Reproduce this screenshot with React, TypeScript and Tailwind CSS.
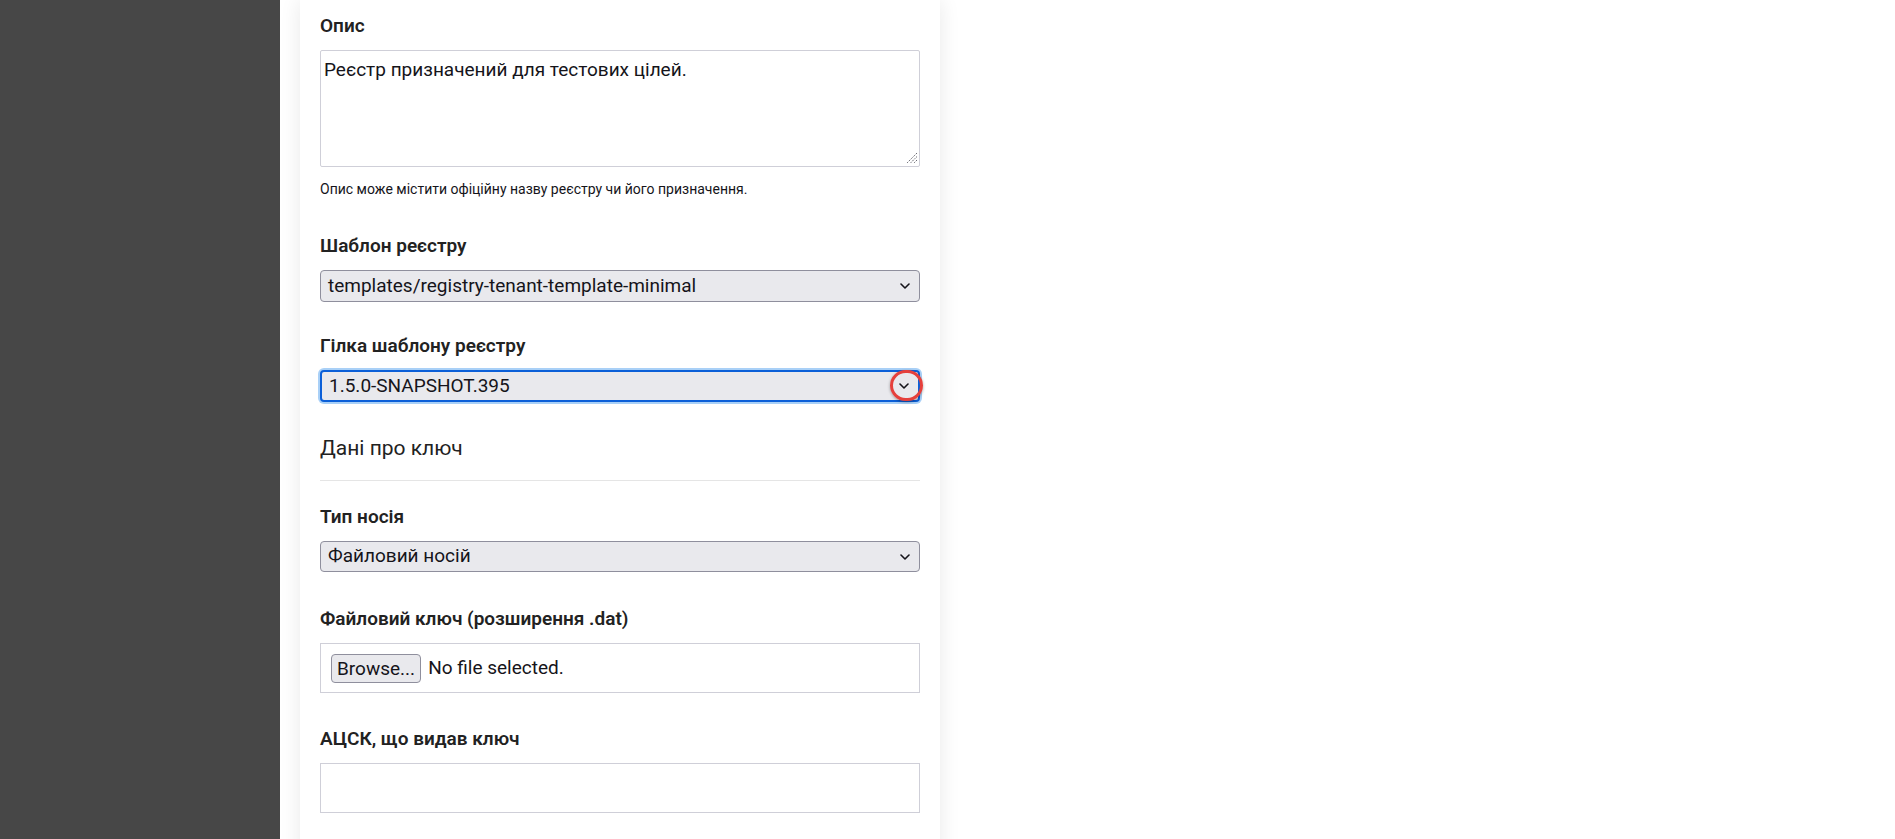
import React from 'react';

const font = { fontFamily: 'Roboto, "Noto Sans", sans-serif' };

function Chevron() {
  return (
    <svg width="10" height="6" viewBox="0 0 10 6" className="shrink-0">
      <polyline points="1,1 5,5 9,1" fill="none" stroke="#15141a" strokeWidth="1.6" strokeLinecap="round" strokeLinejoin="round" />
    </svg>
  );
}

function Label({ children, className = '' }: { children: React.ReactNode; className?: string }) {
  return (
    <div className={`text-[19px] leading-[24px] font-semibold text-[#222] mb-[12px] ${className}`}>{children}</div>
  );
}

function Select({ value, focused = false, h = 'h-[32px]' }: { value: string; focused?: boolean; h?: string }) {
  return (
    <div
      className={`relative flex items-center justify-between ${h} rounded-[4px] bg-[#e9e9ed] pl-[7px] pr-[9px] text-[19px] text-[#15141a] ${
        focused
          ? 'border-2 border-[#0b5fd8] shadow-[0_0_0_2px_#a9d0f7] pl-[6px] pr-[8px]'
          : 'border border-[#8f8f9d]'
      }`}
    >
      <span>{value}</span>
      <Chevron />
      {focused && (
        <span className="absolute right-[-5px] top-[-2px] w-[33px] h-[31px] rounded-full border-[3px] border-[#e5403c] shadow-[0_1px_3px_rgba(0,0,0,0.35)]" />
      )}
    </div>
  );
}

export default function App() {
  return (
    <div className="flex h-[839px] w-full overflow-hidden bg-white" style={font}>
      {/* Sidebar */}
      <div className="w-[280px] shrink-0 bg-[#474747]" />

      {/* Main */}
      <div className="flex-1 bg-white pl-[20px]">
        <div className="w-[640px] bg-white shadow-[0_0_20px_rgba(0,0,0,0.09)] px-[20px] pt-[14px] pb-[60px]">
          <Label>Опис</Label>
          <div className="relative">
            <textarea
              readOnly
              value="Реєстр призначений для тестових цілей."
              className="block w-full h-[117px] resize-none border border-[#cfcfd8] rounded-[2px] bg-white px-[3px] pt-[7px] text-[19px] leading-[24px] text-[#15141a] outline-none"
              style={font}
            />
            <svg width="12" height="12" viewBox="0 0 12 12" className="absolute right-[2px] bottom-[3px]">
              <path d="M11 1 L1 11 M11 4.5 L4.5 11 M11 8 L8 11" stroke="#6b6b73" strokeWidth="1" strokeDasharray="1.5 1" fill="none" />
            </svg>
          </div>
          <div className="mt-[12px] text-[14px] leading-[20px] text-[#15141a]">
            Опис може містити офіційну назву реєстру чи його призначення.
          </div>

          <Label className="mt-[35px]">Шаблон реєстру</Label>
          <Select value="templates/registry-tenant-template-minimal" />

          <Label className="mt-[32px]">Гілка шаблону реєстру</Label>
          <Select value="1.5.0-SNAPSHOT.395" focused />

          <div className="mt-[32px] text-[21px] leading-[28px] text-[#222]">Дані про ключ</div>
          <div className="mt-[18px] h-px bg-[#e5e5e5]" />

          <Label className="mt-[24px]">Тип носія</Label>
          <Select value="Файловий носій" h="h-[31px]" />

          <Label className="mt-[35px]">Файловий ключ (розширення .dat)</Label>
          <div className="flex h-[50px] items-center border border-[#cfcfd8] pl-[10px] text-[19px] text-[#15141a]">
            <button className="h-[29px] rounded-[4px] border border-[#8f8f9d] bg-[#e9e9ed] px-[5px] text-[19px] text-[#15141a]" style={font}>
              Browse...
            </button>
            <span className="ml-[7px]">No file selected.</span>
          </div>

          <Label className="mt-[34px]">АЦСК, що видав ключ</Label>
          <div className="h-[50px] border border-[#cfcfd8] bg-white" />
        </div>
      </div>
    </div>
  );
}
